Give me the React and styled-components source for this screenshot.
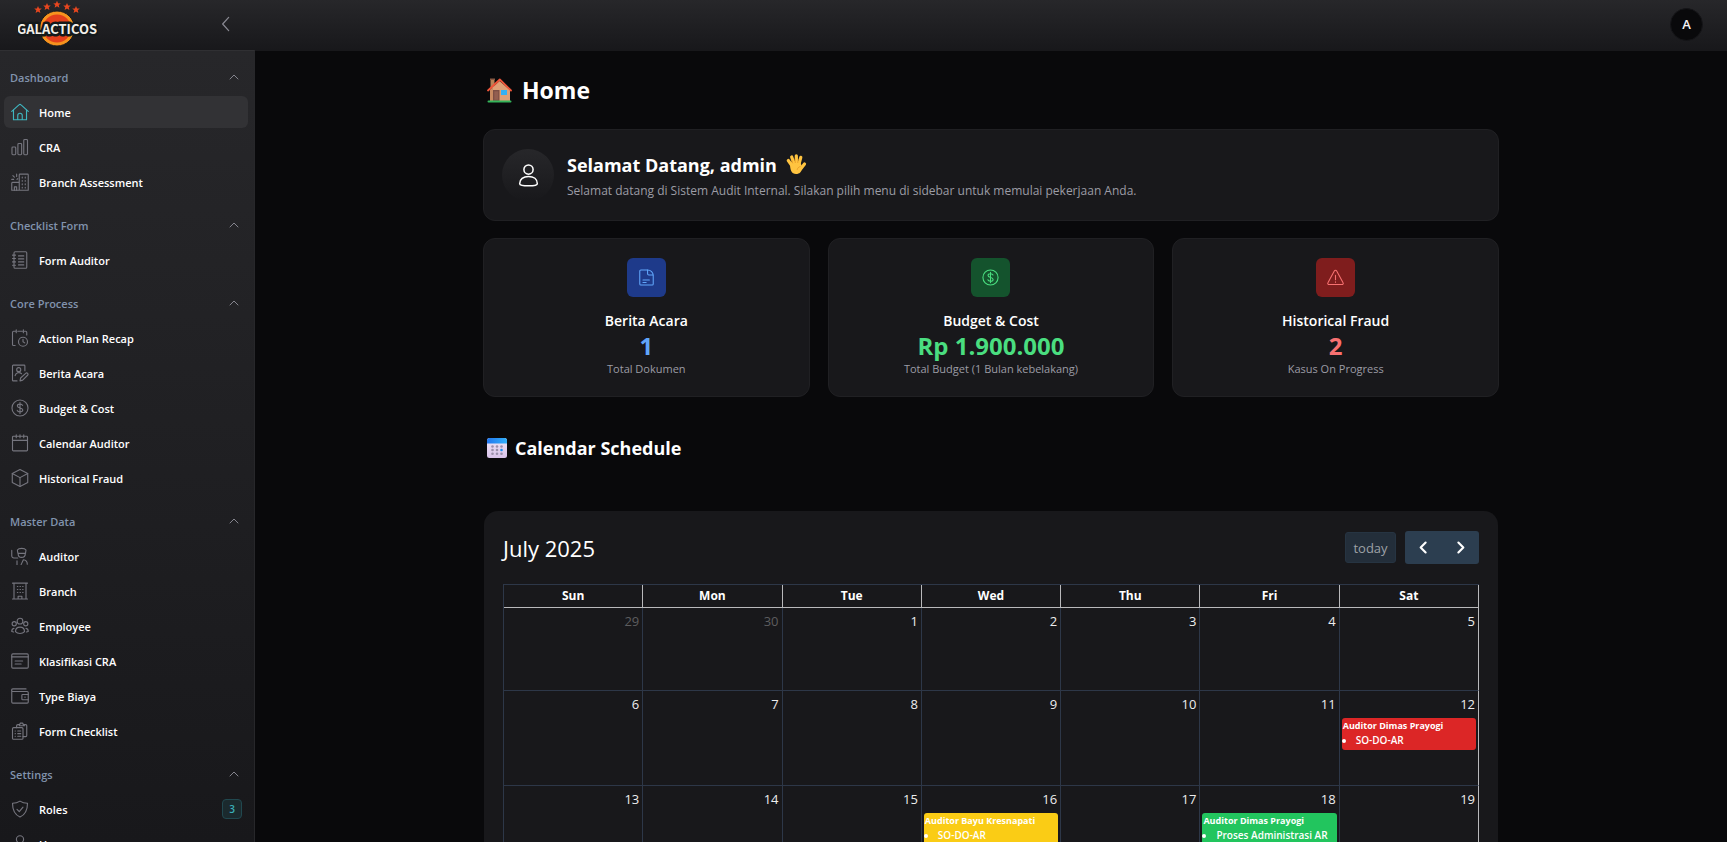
import React from "react";
import styled, { createGlobalStyle, css } from "styled-components";

const GlobalStyle = createGlobalStyle`
  *, *::before, *::after { box-sizing: border-box; }
  html, body { margin: 0; background: #09090b; }
  body, button { font-family: "Open Sans", "Noto Sans", sans-serif; }
  h1, h2, h3, p, ul { margin: 0; padding: 0; }
  ul { list-style: none; }
`;

/* ---------- shell ---------- */

const Shell = styled.div`
  display: flex;
  flex-direction: column;
  height: 100vh;
  overflow: hidden;
  color: #fff;
  background: #09090b;
`;

const TopBar = styled.header`
  display: flex;
  align-items: center;
  flex: none;
  height: 50px;
  padding: 0 24px 2px 18px;
  background: linear-gradient(#27272a, #18181b);
`;

const LogoLink = styled.a`
  display: block;
  height: 48px;
`;

const CollapseButton = styled.button`
  display: flex;
  margin-left: 120px;
  padding: 0;
  border: 0;
  background: none;
  color: #8a8a93;
`;

const Avatar = styled.button`
  width: 33px;
  height: 33px;
  margin-left: auto;
  padding: 0;
  border: 1px solid #151518;
  border-radius: 50%;
  background: #09090b;
  color: #f4f4f5;
  font-size: 13px;
  font-weight: 600;
`;

const Body = styled.div`
  display: flex;
  flex: 1;
  min-height: 0;
`;

/* ---------- sidebar ---------- */

const Sidebar = styled.nav`
  flex: none;
  width: 255px;
  padding: 10px 6px 0 4px;
  overflow: hidden;
  background: linear-gradient(#27272a, #18181b);
  border-right: 1px solid #27272a;
  border-top: 1px solid #303033;
`;

const Group = styled.section`
  display: flex;
  flex-direction: column;
  gap: 3px;
  margin-bottom: 11px;
`;

const GroupToggle = styled.button`
  display: flex;
  align-items: center;
  justify-content: space-between;
  height: 32px;
  padding: 0 8px 0 6px;
  border: 0;
  background: none;
  color: #8193ad;
  font-size: 11px;
  font-weight: 600;

  svg { color: #85858e; }
`;

const NavList = styled.ul`
  display: flex;
  flex-direction: column;
  gap: 3px;
`;

const NavLink = styled.a`
  display: flex;
  align-items: center;
  gap: 10px;
  height: 32px;
  padding: 0 6px 0 7px;
  border-radius: 6px;
  color: #fff;
  font-size: 11px;
  font-weight: 600;
  text-decoration: none;

  svg { flex: none; color: #75757e; }

  ${({ $active }) => $active && css`
    background: #323235;
    svg { color: #3fb6c0; }
  `}
`;

const Badge = styled.span`
  margin-left: auto;
  width: 20px;
  height: 20px;
  border: 1px solid #21484f;
  border-radius: 4px;
  background: #1b2a2e;
  color: #3aafb9;
  font-size: 10px;
  font-weight: 600;
  line-height: 18px;
  text-align: center;
`;

/* ---------- main ---------- */

const Main = styled.main`
  flex: 1;
  min-width: 0;
  overflow: hidden;
  padding: 19px 24px 0;
  border-top: 1px solid #18181b;
`;

const Container = styled.div`
  max-width: 1016px;
  margin: 0 auto;
`;

const PageTitle = styled.h1`
  display: flex;
  align-items: center;
  gap: 10px;
  height: 40px;
  margin-bottom: 19px;
  padding-left: 4px;
  font-size: 23px;
  line-height: 32px;
`;

const Card = styled.div`
  border: 1px solid #202023;
  border-radius: 12px;
  background: #18181b;
`;

const WelcomeCard = styled(Card)`
  display: flex;
  align-items: center;
  gap: 13px;
  height: 92px;
  margin-bottom: 17px;
  padding: 0 18px;
`;

const UserCircle = styled.div`
  display: grid;
  place-items: center;
  width: 52px;
  height: 52px;
  border-radius: 50%;
  background: linear-gradient(#27272a, #18181b);
`;

const WelcomeText = styled.div`
  padding-top: 3px;
`;

const WelcomeTitle = styled.h2`
  display: flex;
  align-items: center;
  gap: 9px;
  font-size: 18px;
  line-height: 28px;
`;

const Muted = styled.p`
  color: #9c9ca5;
  font-size: ${({ $small }) => ($small ? 11 : 12)}px;
  line-height: ${({ $small }) => ($small ? 16 : 24)}px;
`;

const StatGrid = styled.div`
  display: grid;
  grid-template-columns: repeat(3, 1fr);
  gap: 18px;
`;

const StatCard = styled(Card)`
  display: flex;
  flex-direction: column;
  align-items: center;
  height: 159px;
  padding-top: 19px;
`;

const StatIcon = styled.div`
  display: grid;
  place-items: center;
  width: 39px;
  height: 39px;
  margin-bottom: 14px;
  border-radius: 6px;
  background: ${({ $bg }) => $bg};
  color: ${({ $fg }) => $fg};
`;

const StatTitle = styled.h3`
  font-size: 14px;
  font-weight: 600;
  line-height: 20px;
`;

const StatValue = styled.p`
  color: ${({ $fg }) => $fg};
  font-size: 24px;
  font-weight: 700;
  line-height: 30px;
`;

const SectionTitle = styled.h2`
  display: flex;
  align-items: center;
  gap: 8px;
  margin: 38px 0 50px 4px;
  font-size: 18px;
  line-height: 26px;
`;

/* ---------- calendar ---------- */

const CalendarCard = styled.section`
  margin: 0 1px;
  padding: 20px 19px;
  border-radius: 14px;
  background: #18181b;
`;

const CalendarBar = styled.div`
  display: flex;
  align-items: center;
  height: 33px;
  margin-bottom: 20px;
`;

const Month = styled.h2`
  margin-right: auto;
  font-size: 22px;
  font-weight: 400;
`;

const TodayButton = styled.button`
  height: 31px;
  width: 51px;
  margin-right: 9px;
  padding: 0;
  border: 1px solid #263442;
  border-radius: 3px;
  background: #232e3a;
  color: #9da1a6;
  font-size: 13px;
  font-weight: 500;
`;

const ButtonPair = styled.div`
  display: flex;
  overflow: hidden;
  border-radius: 3px;
`;

const ArrowButton = styled.button`
  display: grid;
  place-items: center;
  width: 37px;
  height: 33px;
  padding: 0;
  border: 0;
  background: #2c3e50;
  color: #fff;
`;

const slate = "#2d3748";
const light = "#b9b9bb";

const MonthTable = styled.table`
  width: 100%;
  table-layout: fixed;
  border-collapse: separate;
  border-spacing: 0;
  border: 0 solid ${slate};
  border-width: 1px 0 0 1px;
`;

const DayHead = styled.th`
  height: 23px;
  padding: 0;
  border: 0 solid ${light};
  border-width: 0 1px 1px 0;
  font-size: 12px;
  font-weight: 700;
  line-height: 20px;
`;

const DayCell = styled.td`
  height: 83px;
  padding: 0;
  border: 0 solid ${slate};
  border-width: 0 1px 1px 0;
  vertical-align: top;

  &:last-child { border-right-color: ${light}; }
`;

const DayNumber = styled.div`
  height: 27px;
  padding: 3px 3px 0 0;
  color: ${({ $out }) => ($out ? "#5d5d5f" : "#ededee")};
  font-size: 13px;
  font-weight: 500;
  line-height: 20px;
  text-align: right;
`;

const Event = styled.article`
  margin: 0 2px 35px;
  padding: 0 1px 3px;
  border-radius: 3px;
  background: ${({ $bg }) => $bg};
  font-weight: 600;
  font-size: 10px;
  line-height: 14px;
  white-space: nowrap;
  overflow: hidden;
`;

const EventTitle = styled.h3`
  font-size: 9px;
  font-weight: 700;
  line-height: 15px;
`;

const EventItems = styled.ul`
  padding-left: 13px;
  list-style: disc outside;
`;

/* ---------- drawings ---------- */

const Icon = ({ size = 18, width = 1.5, children }) => (
  <svg width={size} height={size} viewBox="0 0 24 24" fill="none" stroke="currentColor"
    strokeWidth={width} strokeLinecap="round" strokeLinejoin="round" aria-hidden="true">
    {children}
  </svg>
);

const glyphs = {
  home: (
    <>
      <path d="M1 11.2 10.6 2.6a2 2 0 0 1 2.8 0L23 11.2" />
      <path d="M3.3 9.4v12.9h17.4V9.4" />
      <path d="M9 22v-5.400a3 3 0 0 1 6 0V22" />
    </>
  ),
  bars: (
    <>
      <rect x="1.300" y="12" width="5" height="10.300" rx="1.200" />
      <rect x="9.200" y="7.300" width="5" height="15" rx="1.200" />
      <rect x="17" y="2" width="5" height="20.300" rx="1.200" />
    </>
  ),
  assessment: (
    <>
      <path d="M11 23V2.500a1 1 0 0 1 1-1h10a1 1 0 0 1 1 1V23H1V13.500a1 1 0 0 1 1-1h9" />
      <path d="M4.500 23v-4.500h3V23M15 5.500v1M19 5.500v1M15 10v1M19 10v1M15 14.500v1M19 14.500v1M15 19v1M19 19v1" />
      <path d="M1 8.500h2.500M7.500 1.500v3M2.500 3.500l2 2M8 8.500l1-1" />
    </>
  ),
  notebook: (
    <>
      <rect x="4" y="1" width="17" height="22" rx="1.500" />
      <path d="M2 5.500h4M2 10h4M2 14.500h4M2 19h4M10 6.500h7M10 10.500h7M10 14.500h7M10 18.500h7" />
    </>
  ),
  plan: (
    <>
      <path d="M5.500 22H3.500a1.500 1.500 0 0 1-1.500-1.500V4.500A1.500 1.500 0 0 1 3.500 3H6M9 3h6M18 3h1.500A1.500 1.500 0 0 1 21 4.500V8M7 1v4M16.500 1v4" />
      <circle cx="16" cy="17" r="6" />
      <path d="M16 13.800V17l2.300 1.500" />
    </>
  ),
  minutes: (
    <>
      <path d="M8 22.500H3a1 1 0 0 1-1-1V2.500a1 1 0 0 1 1-1h14.500a1 1 0 0 1 1 1V9" />
      <circle cx="10.300" cy="7.500" r="2.700" />
      <path d="M5.500 15.500a5 5 0 0 1 8.500-2.500M12 22.500l.8-3.800 6.800-6.300a1.800 1.800 0 0 1 2.500 2.600l-6.500 6.500z" />
    </>
  ),
  coin: (
    <>
      <circle cx="12" cy="12" r="10.700" />
      <path d="M15.500 8.500C15 7.300 13.800 6.800 12 6.800c-2.200 0-3.500 1-3.500 2.500 0 3.700 7.200 1.700 7.200 5.400 0 1.600-1.500 2.500-3.700 2.500-2 0-3.300-.7-3.700-2M12 4.800v14.400" />
    </>
  ),
  calendar: (
    <>
      <rect x="2" y="3" width="20" height="19.500" rx="1.200" />
      <path d="M2 8.500h20M7 1v4M12 1v4M17 1v4" />
    </>
  ),
  box: (
    <>
      <path d="M12 .8 22.300 6v12L12 23.200 1.700 18V6z" />
      <path d="M1.700 6 12 11.500 22.300 6M12 11.500v11.700" />
    </>
  ),
  auditor: (
    <>
      <path d="M1 4.500v7.200a3 3 0 0 0 3 3h5M8.500 4c2-3 9.500-3 11.500 0l-.7 4.500H9.200zM9.500 8.500c0 4 1.800 5.300 4.600 5.300s5-1.300 5-5.300" />
      <path d="M8 18.500v5M13.500 23.500l3-6.500c3 .3 5.200 2.300 5.200 6" />
    </>
  ),
  branch: (
    <>
      <path d="M2 1.500h20M2 22.700h20M4 1.500v21.200M20 1.500v21.200M9.500 22.500v-3.500h5v3.500" />
      <path d="M8.500 6h.6M12 6h.6M15.500 6h.6M8.500 10h.6M12 10h.6M15.500 10h.6M8.500 14h.6M12 14h.6M15.500 14h.6" />
    </>
  ),
  people: (
    <>
      <circle cx="12" cy="5.500" r="3.800" />
      <circle cx="4.300" cy="9" r="2.800" />
      <circle cx="19.700" cy="9" r="2.800" />
      <path d="M6 19.500c0-4 2.500-6 6-6s6 2 6 6c-1.500 1.800-3.500 2.500-6 2.500s-4.500-.7-6-2.500zM4 15.200c-2 .3-3 1.800-3 4.100l2.500.7M20 15.200c2 .3 3 1.800 3 4.100l-2.500.7" />
    </>
  ),
  window: (
    <>
      <rect x="1" y="2.500" width="22" height="19" rx="1.500" />
      <path d="M1 6.500h22M5.500 12h10M5.500 16h8" />
    </>
  ),
  wallet: (
    <>
      <path d="M20 2.500H2.500a1.500 1.500 0 0 0 0 3.500H21.500a1.500 1.500 0 0 1 1.500 1.500V20a1.500 1.500 0 0 1-1.500 1.500h-19A1.500 1.500 0 0 1 1 20V4" />
      <path d="M23 10h-7.500a1 1 0 0 0-1 1v5a1 1 0 0 0 1 1H23M18.500 13.500h.4" />
    </>
  ),
  clipboards: (
    <>
      <path d="M3.500 7.500h11a1.500 1.500 0 0 1 1.500 1.500v12.500a1.500 1.500 0 0 1-1.500 1.500h-11A1.500 1.500 0 0 1 2 21.500V9a1.500 1.500 0 0 1 1.500-1.500z" />
      <path d="M7.500 7.500V5a1.500 1.500 0 0 1 1.500-1.500h2.500l1-2h3l1 2h3A1.500 1.500 0 0 1 21 5v13a1.500 1.500 0 0 1-1.500 1.500H16M11 5h7" />
      <path d="M5.500 12h.3M9 12h4M5.500 15.500h.3M9 15.500h4M5.500 19h.3M9 19h4" />
    </>
  ),
  shield: (
    <>
      <path d="M12 1.500c3 2 6.500 2.800 10 2.800 0 8.500-2.500 15-10 18.500C4.500 19.300 2 12.800 2 4.300c3.500 0 7-.8 10-2.800z" />
      <path d="m8 12.500 3 3 5-6" />
    </>
  ),
  user: (
    <>
      <circle cx="12" cy="5.800" r="4.800" />
      <path d="M2.800 20.500c0-4.500 3.700-7.500 9.200-7.500s9.200 3 9.200 7.500c0 1.500-3 2.200-9.200 2.200s-9.200-.7-9.200-2.200z" />
    </>
  ),
};

const Chevron = ({ direction, size, width }) => {
  const paths = { up: "M4 16l8-8 8 8", left: "M16 2 7 12l9 10", prev: "M15 5l-7 7 7 7", next: "M9 5l7 7-7 7" };
  return <Icon size={size} width={width}><path d={paths[direction]} /></Icon>;
};

const star = "M0-3.800 1.100-1.300 3.800-1.100 1.700.600 2.400 3.300 0 1.800-2.400 3.300-1.700.600-3.800-1.100-1.100-1.300z";

const Logo = () => (
  <svg width="80" height="48" viewBox="0 0 80 48" role="img" aria-label="Galacticos">
    <circle cx="39" cy="28.500" r="17.500" fill="#f7931e" stroke="#171a1c" strokeWidth="1" />
    <circle cx="39" cy="28.500" r="14" fill="#e5401c" />
    {[[20, 9.700], [29, 6.700], [39, 4.500], [49, 6.700], [58, 9.700]].map(([x, y]) => (
      <path key={x} d={star} transform={`translate(${x} ${y})`} fill="#e8461f" />
    ))}
    <text x="39" y="34" textAnchor="middle" fontFamily="'Noto Sans CJK JP', 'Liberation Sans', sans-serif"
      fontSize="13" fontWeight="700" fill="#f2efe9" stroke="#14191b" strokeWidth="5"
      strokeLinejoin="round" paintOrder="stroke">
      GALACTICOS
    </text>
  </svg>
);

const House = () => (
  <svg width="25" height="25" viewBox="0 0 25 25" aria-hidden="true">
    <rect x="3.500" y="1" width="4" height="9" fill="#b98256" />
    <rect x="3" y=".5" width="5" height="1.500" fill="#8a5a44" />
    <path d="M3 12 12.500 3 23 12v11H3z" fill="#dfa077" />
    <path d="M3 12v11h3V9z" fill="#c98b62" />
    <rect x="6" y="12" width="6.500" height="11" fill="#7d4f44" />
    <rect x="7.300" y="13.300" width="4" height="8.500" fill="#935f50" />
    <rect x="14" y="12" width="6" height="5" fill="#35b1f5" />
    <path d="M1 12.500 12.800 1.500 24 12.500" fill="none" stroke="#f0553a" strokeWidth="1.800" strokeLinecap="round" strokeLinejoin="round" />
    <rect x=".5" y="22.500" width="24" height="2" rx="1" fill="#35b55b" />
  </svg>
);

const Hand = () => (
  <svg width="21" height="21" viewBox="0 0 21 21" aria-hidden="true" fill="none" stroke="#ffc440" strokeLinecap="round">
    <path d="M5.500 11 2.300 6.500M8 10 5.700 3M10.500 9.500 10.300 1.800M13 10l1.800-6.700" strokeWidth="3.200" />
    <path d="M15 14.500 18.500 10" strokeWidth="3.200" />
    <path d="M4 9.500c3-2.500 7-2.500 10.500-.5l2 4.500c-1 4.500-3 6.500-6.500 6.500-4.500 0-6-4-6-10.500z" fill="#ffc440" stroke="none" />
    <path d="M6.700 9 5.800 6.200M9.300 8.600 9 5M11.800 8.600l.3-3.300M14.200 12.500c-1.800.5-2.700 1.700-3 3" stroke="#e39422" strokeWidth=".7" />
  </svg>
);

const CalendarEmoji = () => (
  <svg width="20" height="20" viewBox="0 0 20 20" aria-hidden="true">
    <defs>
      <linearGradient id="calTop"><stop stopColor="#2277ee" /><stop offset="1" stopColor="#31b0fb" /></linearGradient>
      <linearGradient id="calPage" x2="0" y2="1"><stop stopColor="#efe6f5" /><stop offset="1" stopColor="#d9c3ea" /></linearGradient>
    </defs>
    <rect width="20" height="20" rx="2.500" fill="url(#calPage)" />
    <path d="M0 5.500v-3A2.500 2.500 0 0 1 2.500 0h15A2.500 2.500 0 0 1 20 2.500v3z" fill="url(#calTop)" />
    {[8.500, 12, 15.700].map((y) => [5.500, 10, 14.500].map((x) => (
      <circle key={`${x}-${y}`} cx={x} cy={y} r="1.300" fill={x === 14.500 && y === 12 ? "#1c8df0" : "#9b8fab"} />
    )))}
  </svg>
);

const fileGlyph = (
  <>
    <path d="M13.500 1.500H4a1.500 1.500 0 0 0-1.500 1.500v18A1.500 1.500 0 0 0 4 22.500h16a1.500 1.500 0 0 0 1.500-1.500V9.500c0-4.500-3.500-8-8-8z" />
    <path d="M13.500 1.500v5.200a1.800 1.800 0 0 0 1.800 1.800h6M7 15.500h9M7 19h4.500" />
  </>
);

const alertGlyph = (
  <>
    <path d="M10.300 2.800 1.300 19.300A1.800 1.800 0 0 0 2.900 22h18.200a1.800 1.800 0 0 0 1.600-2.700l-9-16.500a2 2 0 0 0-3.400 0z" />
    <path d="M12 9v6M12 18.200v.4" />
  </>
);

/* ---------- data ---------- */

const groups = [
  { title: "Dashboard", items: [["Home", "home"], ["CRA", "bars"], ["Branch Assessment", "assessment"]] },
  { title: "Checklist Form", items: [["Form Auditor", "notebook"]] },
  {
    title: "Core Process",
    items: [["Action Plan Recap", "plan"], ["Berita Acara", "minutes"], ["Budget & Cost", "coin"],
      ["Calendar Auditor", "calendar"], ["Historical Fraud", "box"]],
  },
  {
    title: "Master Data",
    items: [["Auditor", "auditor"], ["Branch", "branch"], ["Employee", "people"],
      ["Klasifikasi CRA", "window"], ["Type Biaya", "wallet"], ["Form Checklist", "clipboards"]],
  },
  { title: "Settings", items: [["Roles", "shield", 3], ["Users", "user"]] },
];

const stats = [
  { title: "Berita Acara", value: "1", note: "Total Dokumen", bg: "#1e3a8a", fg: "#60a5fa", glyph: fileGlyph },
  { title: "Budget & Cost", value: "Rp 1.900.000", note: "Total Budget (1 Bulan kebelakang)", bg: "#14532d", fg: "#4ade80", glyph: glyphs.coin },
  { title: "Historical Fraud", value: "2", note: "Kasus On Progress", bg: "#7f1d1d", fg: "#f87171", glyph: alertGlyph },
];

const weekdays = ["Sun", "Mon", "Tue", "Wed", "Thu", "Fri", "Sat"];
const weeks = [[29, 30, 1, 2, 3, 4, 5], [6, 7, 8, 9, 10, 11, 12], [13, 14, 15, 16, 17, 18, 19]];
const events = {
  12: { title: "Auditor Dimas Prayogi", item: "SO-DO-AR", bg: "#dc2626" },
  16: { title: "Auditor Bayu Kresnapati", item: "SO-DO-AR", bg: "#facc15" },
  18: { title: "Auditor Dimas Prayogi", item: "Proses Administrasi AR", bg: "#22c55e" },
};

/* ---------- page ---------- */

const SideNav = () => (
  <Sidebar aria-label="Main menu">
    {groups.map((group) => (
      <Group key={group.title}>
        <GroupToggle type="button" aria-expanded="true">
          {group.title}
          <Chevron direction="up" size={12} width={2} />
        </GroupToggle>
        <NavList>
          {group.items.map(([label, glyph, count]) => (
            <li key={label}>
              <NavLink href="#" $active={label === "Home"}>
                <Icon>{glyphs[glyph]}</Icon>
                {label}
                {count && <Badge>{count}</Badge>}
              </NavLink>
            </li>
          ))}
        </NavList>
      </Group>
    ))}
  </Sidebar>
);

const Calendar = () => (
  <CalendarCard>
    <CalendarBar>
      <Month>July 2025</Month>
      <TodayButton type="button" disabled>today</TodayButton>
      <ButtonPair>
        <ArrowButton type="button" aria-label="Previous month"><Chevron direction="prev" size={17} width={3} /></ArrowButton>
        <ArrowButton type="button" aria-label="Next month"><Chevron direction="next" size={17} width={3} /></ArrowButton>
      </ButtonPair>
    </CalendarBar>
    <MonthTable>
      <thead>
        <tr>{weekdays.map((day) => <DayHead key={day} scope="col">{day}</DayHead>)}</tr>
      </thead>
      <tbody>
        {weeks.map((week, row) => (
          <tr key={week[0]}>
            {week.map((day) => {
              const event = events[day];
              return (
                <DayCell key={day}>
                  <DayNumber $out={row === 0 && day > 7}>{day}</DayNumber>
                  {event && (
                    <Event $bg={event.bg}>
                      <EventTitle>{event.title}</EventTitle>
                      <EventItems><li>{event.item}</li></EventItems>
                    </Event>
                  )}
                </DayCell>
              );
            })}
          </tr>
        ))}
      </tbody>
    </MonthTable>
  </CalendarCard>
);

export default function App() {
  return (
    <Shell>
      <GlobalStyle />
      <TopBar>
        <LogoLink href="#"><Logo /></LogoLink>
        <CollapseButton type="button" aria-label="Collapse sidebar">
          <Chevron direction="left" size={16} width={1.8} />
        </CollapseButton>
        <Avatar type="button">A</Avatar>
      </TopBar>
      <Body>
        <SideNav />
        <Main>
          <Container>
            <PageTitle><House />Home</PageTitle>
            <WelcomeCard>
              <UserCircle><Icon size={23} width={1.6}>{glyphs.user}</Icon></UserCircle>
              <WelcomeText>
                <WelcomeTitle>Selamat Datang, admin <Hand /></WelcomeTitle>
                <Muted>Selamat datang di Sistem Audit Internal. Silakan pilih menu di sidebar untuk memulai pekerjaan Anda.</Muted>
              </WelcomeText>
            </WelcomeCard>
            <StatGrid>
              {stats.map((stat) => (
                <StatCard key={stat.title}>
                  <StatIcon $bg={stat.bg} $fg={stat.fg}><Icon size={17}>{stat.glyph}</Icon></StatIcon>
                  <StatTitle>{stat.title}</StatTitle>
                  <StatValue $fg={stat.fg}>{stat.value}</StatValue>
                  <Muted $small>{stat.note}</Muted>
                </StatCard>
              ))}
            </StatGrid>
            <SectionTitle><CalendarEmoji />Calendar Schedule</SectionTitle>
            <Calendar />
          </Container>
        </Main>
      </Body>
    </Shell>
  );
}
